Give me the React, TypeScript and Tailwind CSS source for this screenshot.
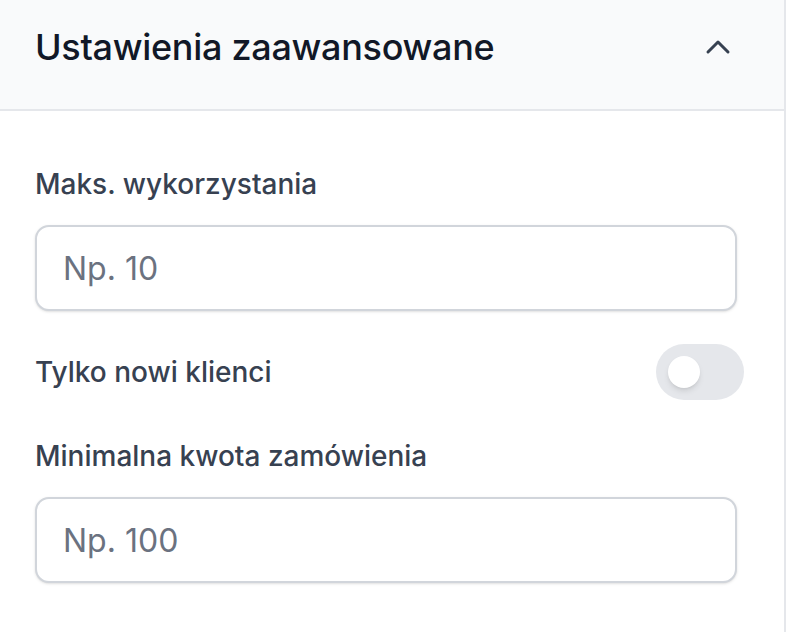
import { ChevronUp } from 'lucide-react';

interface FieldProps {
  label: string;
  placeholder: string;
}

function NumberField({ label, placeholder }: FieldProps) {
  return (
    <div className="flex flex-col gap-[21px]">
      <label className="text-[28px] leading-[40px] font-medium text-[#374151]">{label}</label>
      <input
        type="text"
        placeholder={placeholder}
        className="h-[86px] w-[702px] rounded-[14px] border-2 border-[#d1d5db] bg-white px-[26px] text-[32px] text-[#111827] shadow-sm outline-none placeholder:text-[#6b7280]"
      />
    </div>
  );
}

function Toggle({ on }: { on: boolean }) {
  return (
    <button
      type="button"
      role="switch"
      aria-checked={on}
      className="flex h-[56px] w-[88px] items-center rounded-full bg-[#e5e7eb] px-[12px]"
    >
      <span className="h-[32px] w-[32px] rounded-full bg-white shadow-md" />
    </button>
  );
}

export default function App() {
  return (
    <div
      className="min-h-[632px] w-[786px] border-r-2 border-[#e5e7eb] bg-white"
      style={{ fontFamily: 'Inter, "Noto Sans", sans-serif' }}
    >
      <div className="flex h-[111px] items-center justify-between border-b-2 border-[#e5e7eb] bg-[#f9fafb] pr-[46px] pb-[16px] pl-[35px]">
        <h2 className="text-[36px] font-medium tracking-[-0.3px] text-[#111827]">Ustawienia zaawansowane</h2>
        <ChevronUp size={40} strokeWidth={1.8} className="text-[#374151]" />
      </div>

      <div className="flex flex-col pt-[53px] pl-[35px]">
        <NumberField label="Maks. wykorzystania" placeholder="Np. 10" />

        <div className="mt-[33px] flex w-[709px] items-center justify-between">
          <span className="text-[28px] leading-[40px] font-medium text-[#374151]">Tylko nowi klienci</span>
          <Toggle on={false} />
        </div>

        <div className="mt-[36px]">
          <NumberField label="Minimalna kwota zamówienia" placeholder="Np. 100" />
        </div>
      </div>
    </div>
  );
}
